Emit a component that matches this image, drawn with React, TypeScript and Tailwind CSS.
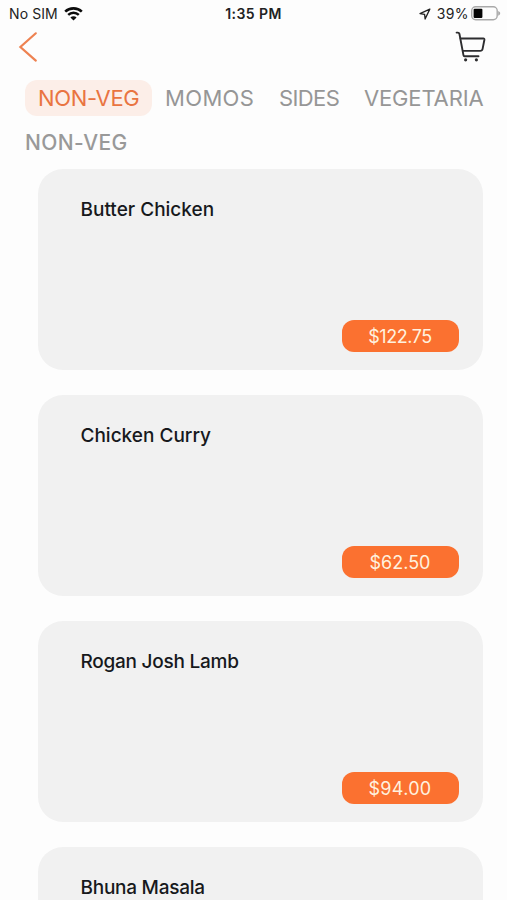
import { FC } from "react";
import { clsx } from "clsx";

interface MenuItem {
  name: string;
  price?: string;
  nameClass?: string;
  priceClass?: string;
}

interface Category {
  label: string;
  className: string;
}

const categories: Category[] = [
  { label: "NON-VEG", className: "w-[127px] tracking-[-0.35px]" },
  { label: "MOMOS", className: "w-[114px] tracking-[0.35px]" },
  { label: "SIDES", className: "w-[85px] tracking-[-0.6px]" },
  { label: "VEGETARIA", className: "w-[144px] tracking-[-0.15px]" },
];

const items: MenuItem[] = [
  { name: "Butter Chicken", price: "$122.75", priceClass: "tracking-[-0.45px]" },
  { name: "Chicken Curry", price: "$62.50" },
  {
    name: "Rogan Josh Lamb",
    price: "$94.00",
    nameClass: "tracking-[-0.25px]",
    priceClass: "tracking-[0.3px]",
  },
  { name: "Bhuna Masala", nameClass: "tracking-[-0.25px]" },
];

const WifiIcon: FC = () => (
  <svg width="19" height="14" viewBox="0 0 19 14" fill="none" stroke="#0c0c0c">
    <path d="M1.2 4.6C5.7.3 13.3.3 17.8 4.6" strokeWidth="2.6" />
    <path d="M4.2 7.9c2.9-2.9 7.7-2.9 10.6 0" strokeWidth="2.4" />
    <path d="M6.4 10.4c1.6-1.5 4.6-1.5 6.2 0l-3.1 3.1z" fill="#0c0c0c" stroke="none" />
  </svg>
);

const LocationIcon: FC = () => (
  <svg width="12" height="12" viewBox="0 0 12 12" fill="none" stroke="#222" strokeWidth="1.3" strokeLinejoin="round">
    <path d="M10.8 1.1 1 5.6l4.6.8.5 4.6z" />
  </svg>
);

const BatteryIcon: FC = () => (
  <svg width="30" height="15" viewBox="0 0 30 15" fill="none">
    <rect x=".7" y=".8" width="25.5" height="13" rx="4" stroke="#a9a9a9" strokeWidth="1.4" />
    <rect x="2.6" y="2.7" width="8.8" height="9.2" rx="1" fill="#050505" />
    <path d="M27.2 5v4.7c1.2-.4 2-1.3 2-2.35S28.4 5.4 27.2 5z" fill="#a9a9a9" />
  </svg>
);

const BackIcon: FC = () => (
  <svg width="20" height="32" viewBox="0 0 20 32" fill="none" stroke="#ee8251" strokeWidth="2.2" strokeLinecap="round">
    <path d="M17.8 2.3 2.4 16l15.4 13.6" />
  </svg>
);

const CartIcon: FC = () => (
  <svg
    width="32"
    height="32"
    viewBox="0 0 32 32"
    fill="none"
    stroke="#2d2d2f"
    strokeWidth="1.9"
    strokeLinecap="round"
    strokeLinejoin="round"
  >
    <path d="M1.6 1.6h1.3c.8 0 1.3.4 1.5 1.2l4.1 21.6c.1.6.5.9 1.1.9h13.9" />
    <path d="M5.6 7.5h22.8c.7 0 1.1.5 1 1.2l-1.8 9.2c-.3 1.4-1 2-2.4 2H8" />
    <circle cx="10.6" cy="28.8" r="1.6" fill="#2d2d2f" stroke="none" />
    <circle cx="21.4" cy="28.8" r="1.6" fill="#2d2d2f" stroke="none" />
  </svg>
);

const StatusBar: FC = () => (
  <div className="grid h-[27px] shrink-0 grid-cols-3 items-center text-[14px] text-[#222]">
    <div className="flex items-center gap-[6px] pl-[9px]">
      <span className="tracking-[0.1px]">No SIM</span>
      <WifiIcon />
    </div>
    <span className="text-center font-semibold tracking-[0.45px]">1:35 PM</span>
    <div className="flex items-center justify-end pr-[6px]">
      <LocationIcon />
      <span className="mr-[2px] ml-[6px] tracking-[0.4px]">39%</span>
      <BatteryIcon />
    </div>
  </div>
);

const MenuCard: FC<{ item: MenuItem }> = ({ item }) => (
  <article className="flex h-[201px] shrink-0 flex-col justify-between rounded-[25px] bg-[#f1f1f1] pt-[26px] pr-[24px] pb-[18px] pl-[43px]">
    <h2 className={clsx("text-[19px] leading-[29px] font-medium text-[#17191c]", item.nameClass)}>
      {item.name}
    </h2>
    {item.price ? (
      <div className="flex h-[32px] w-[117px] items-center justify-center self-end rounded-[12px] bg-[#fb7130] pt-px text-[18px] text-[#fff1df]">
        <span className={item.priceClass}>{item.price}</span>
      </div>
    ) : null}
  </article>
);

export default function App() {
  return (
    <div className="flex h-[900px] w-[507px] flex-col overflow-hidden bg-[#fdfdfd] font-['Inter',sans-serif] whitespace-nowrap">
      <StatusBar />
      <header className="flex h-[53px] shrink-0 items-start justify-between pt-[4px] pr-[20px] pl-[18px]">
        <button aria-label="Back">
          <BackIcon />
        </button>
        <button aria-label="Cart">
          <CartIcon />
        </button>
      </header>

      <nav className="flex h-[36px] shrink-0 pl-[25px] text-[22px] text-[#969696]">
        {categories.map((category, index) => (
          <button
            key={category.label}
            className={clsx(
              "flex h-[36px] shrink-0 items-center justify-start pl-[13px]",
              category.className,
              index === 0 && "rounded-[12px] bg-[#fceee8] text-[#e97441]"
            )}
          >
            {category.label}
          </button>
        ))}
      </nav>

      <h1 className="mt-[11px] mb-[10px] h-[32px] shrink-0 pl-[25px] text-[21px] leading-[32px] font-medium tracking-[0.4px] text-[#999]">
        NON-VEG
      </h1>

      <main className="flex flex-col gap-[25px] pr-[24.5px] pl-[37.5px]">
        {items.map((item) => (
          <MenuCard key={item.name} item={item} />
        ))}
      </main>
    </div>
  );
}
